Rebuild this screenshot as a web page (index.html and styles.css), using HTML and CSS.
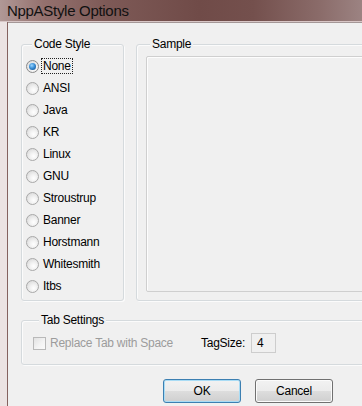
FILE: index.html
```html
<!DOCTYPE html>
<html>
<head>
<meta charset="utf-8">
<title>NppAStyle Options</title>
<link rel="stylesheet" href="styles.css">
</head>
<body>
<div class="window">
  <div class="titlebar">NppAStyle Options</div>
  <div class="frame">
    <div class="frame-left"></div>
    <div class="client">
      <div class="top-row">
        <div class="group code-style">
          <div class="group-label">Code Style</div>
          <div class="radio-list">
            <div class="radio-row"><span class="radio checked"></span><span class="radio-text focused">None</span></div>
            <div class="radio-row"><span class="radio"></span><span class="radio-text">ANSI</span></div>
            <div class="radio-row"><span class="radio"></span><span class="radio-text">Java</span></div>
            <div class="radio-row"><span class="radio"></span><span class="radio-text">KR</span></div>
            <div class="radio-row"><span class="radio"></span><span class="radio-text">Linux</span></div>
            <div class="radio-row"><span class="radio"></span><span class="radio-text">GNU</span></div>
            <div class="radio-row"><span class="radio"></span><span class="radio-text">Stroustrup</span></div>
            <div class="radio-row"><span class="radio"></span><span class="radio-text">Banner</span></div>
            <div class="radio-row"><span class="radio"></span><span class="radio-text">Horstmann</span></div>
            <div class="radio-row"><span class="radio"></span><span class="radio-text">Whitesmith</span></div>
            <div class="radio-row"><span class="radio"></span><span class="radio-text">Itbs</span></div>
          </div>
        </div>
        <div class="group sample">
          <div class="group-label">Sample</div>
          <div class="sample-box"></div>
        </div>
      </div>
      <div class="group tab-settings">
        <div class="group-label">Tab Settings</div>
        <div class="tab-row">
          <div class="check-wrap">
            <span class="checkbox"></span>
            <span class="disabled-text">Replace Tab with Space</span>
          </div>
          <span class="tag-label">TagSize:</span>
          <div class="tag-input">4</div>
        </div>
      </div>
      <div class="button-row">
        <div class="btn default">OK</div>
        <div class="btn">Cancel</div>
      </div>
    </div>
  </div>
</div>
</body>
</html>
```

FILE: styles.css
```css
html, body {
  margin: 0;
  padding: 0;
  width: 362px;
  height: 406px;
  overflow: hidden;
  background: #efe6e6;
}

.window {
  width: 362px;
  height: 406px;
  display: flex;
  flex-direction: column;
  font-family: "Liberation Sans", Arial, sans-serif;
  font-size: 12px;
  color: #000;
}

.titlebar {
  height: 21px;
  line-height: 21px;
  padding-left: 7px;
  font-size: 15px;
  letter-spacing: -0.3px;
  color: #111;
  background: linear-gradient(to right, #b09896 0%, #94716e 12%, #7d5956 30%, #704b48 55%, #74504d 70%, #8a6b69 88%, #9c8382 100%);
  border-bottom: 1px solid #d8c6c6;
  flex: none;
}

.frame {
  flex: 1;
  display: flex;
  min-height: 0;
}

.frame-left {
  width: 7px;
  flex: none;
  background: #ece3e3;
  border-right: 1px solid #85625f;
}

.client {
  flex: 1;
  min-width: 0;
  background: #f0f0f0;
  border-top: 1px solid #a49797;
  padding: 21px 0 0 13px;
  overflow: hidden;
  letter-spacing: -0.25px;
}

.top-row {
  display: flex;
  gap: 12px;
}

.group {
  box-sizing: border-box;
  border: 1px solid #d5dadd;
  border-radius: 3px;
  box-shadow: inset 1px 1px 0 #fbfbfb, 1px 1px 0 #fbfbfb;
}

.group-label {
  width: fit-content;
  height: 14px;
  line-height: 14px;
  margin: -8px 0 0 6px;
  padding: 0 2px;
  background: #f0f0f0;
}

.code-style {
  width: 103px;
  height: 257px;
  flex: none;
  padding-left: 4px;
}

.radio-list {
  margin-top: 4px;
}

.radio-row {
  height: 22px;
  display: flex;
  align-items: center;
  gap: 3px;
}

.radio {
  box-sizing: border-box;
  width: 13px;
  height: 13px;
  border-radius: 50%;
  border: 1px solid #a8a8a8;
  background: radial-gradient(circle at 60% 65%, #ffffff 0%, #f2f2f2 35%, #dcdcdc 80%, #d0d0d0 100%);
  flex: none;
}

.radio.checked {
  border-color: #8a8a8a;
}

.radio.checked::after {
  content: "";
  display: block;
  width: 7px;
  height: 7px;
  margin: 2px;
  border-radius: 50%;
  background: radial-gradient(circle at 40% 35%, #9bd6ff 0%, #3a8fd6 45%, #145596 85%, #0c3f74 100%);
}

.radio-text {
  padding: 0 1px;
  line-height: 14px;
}

.radio-text.focused {
  outline: 1px dotted #222;
  outline-offset: 0;
}

.sample {
  width: 240px;
  height: 257px;
  flex: none;
  padding-left: 9px;
}

.sample .group-label {
  margin-left: 4px;
}

.sample-box {
  box-sizing: border-box;
  margin-top: 5px;
  height: 236px;
  width: 230px;
  border: 1px solid #cfcfcf;
  border-radius: 2px;
  box-shadow: inset 1px 1px 0 #fdfdfd;
  background: #f0f0f0;
}

.tab-settings {
  margin-top: 19px;
  width: 360px;
  height: 45px;
  padding-left: 11px;
}

.tab-row {
  margin-top: 5px;
  height: 22px;
  display: flex;
  align-items: center;
}

.check-wrap {
  width: 168px;
  flex: none;
  display: flex;
  align-items: center;
  gap: 4px;
}

.checkbox {
  box-sizing: border-box;
  width: 13px;
  height: 13px;
  border: 1px solid #b9b9b9;
  background: linear-gradient(135deg, #e2e2e2 0%, #f4f4f4 60%, #fbfbfb 100%);
  flex: none;
}

.disabled-text {
  color: #9c9c9c;
}

.tag-label {
  margin-right: 6px;
}

.tag-input {
  box-sizing: border-box;
  width: 25px;
  height: 20px;
  line-height: 18px;
  padding-left: 5px;
  border: 1px solid #cdcdcd;
  background: #f0f0f0;
}

.button-row {
  display: flex;
  gap: 14px;
  margin: 14px 0 0 142px;
}

.btn {
  box-sizing: border-box;
  width: 78px;
  height: 24px;
  line-height: 22px;
  text-align: center;
  border: 1px solid #707070;
  border-radius: 3px;
  background: linear-gradient(#f2f2f2 0%, #ebebeb 50%, #dddddd 51%, #cfcfcf 100%);
  box-shadow: inset 0 0 0 1px #fbfbfb;
}

.btn.default {
  border-color: #3c7fb1;
  box-shadow: inset 0 0 0 1px #a9dcf5;
}
```
